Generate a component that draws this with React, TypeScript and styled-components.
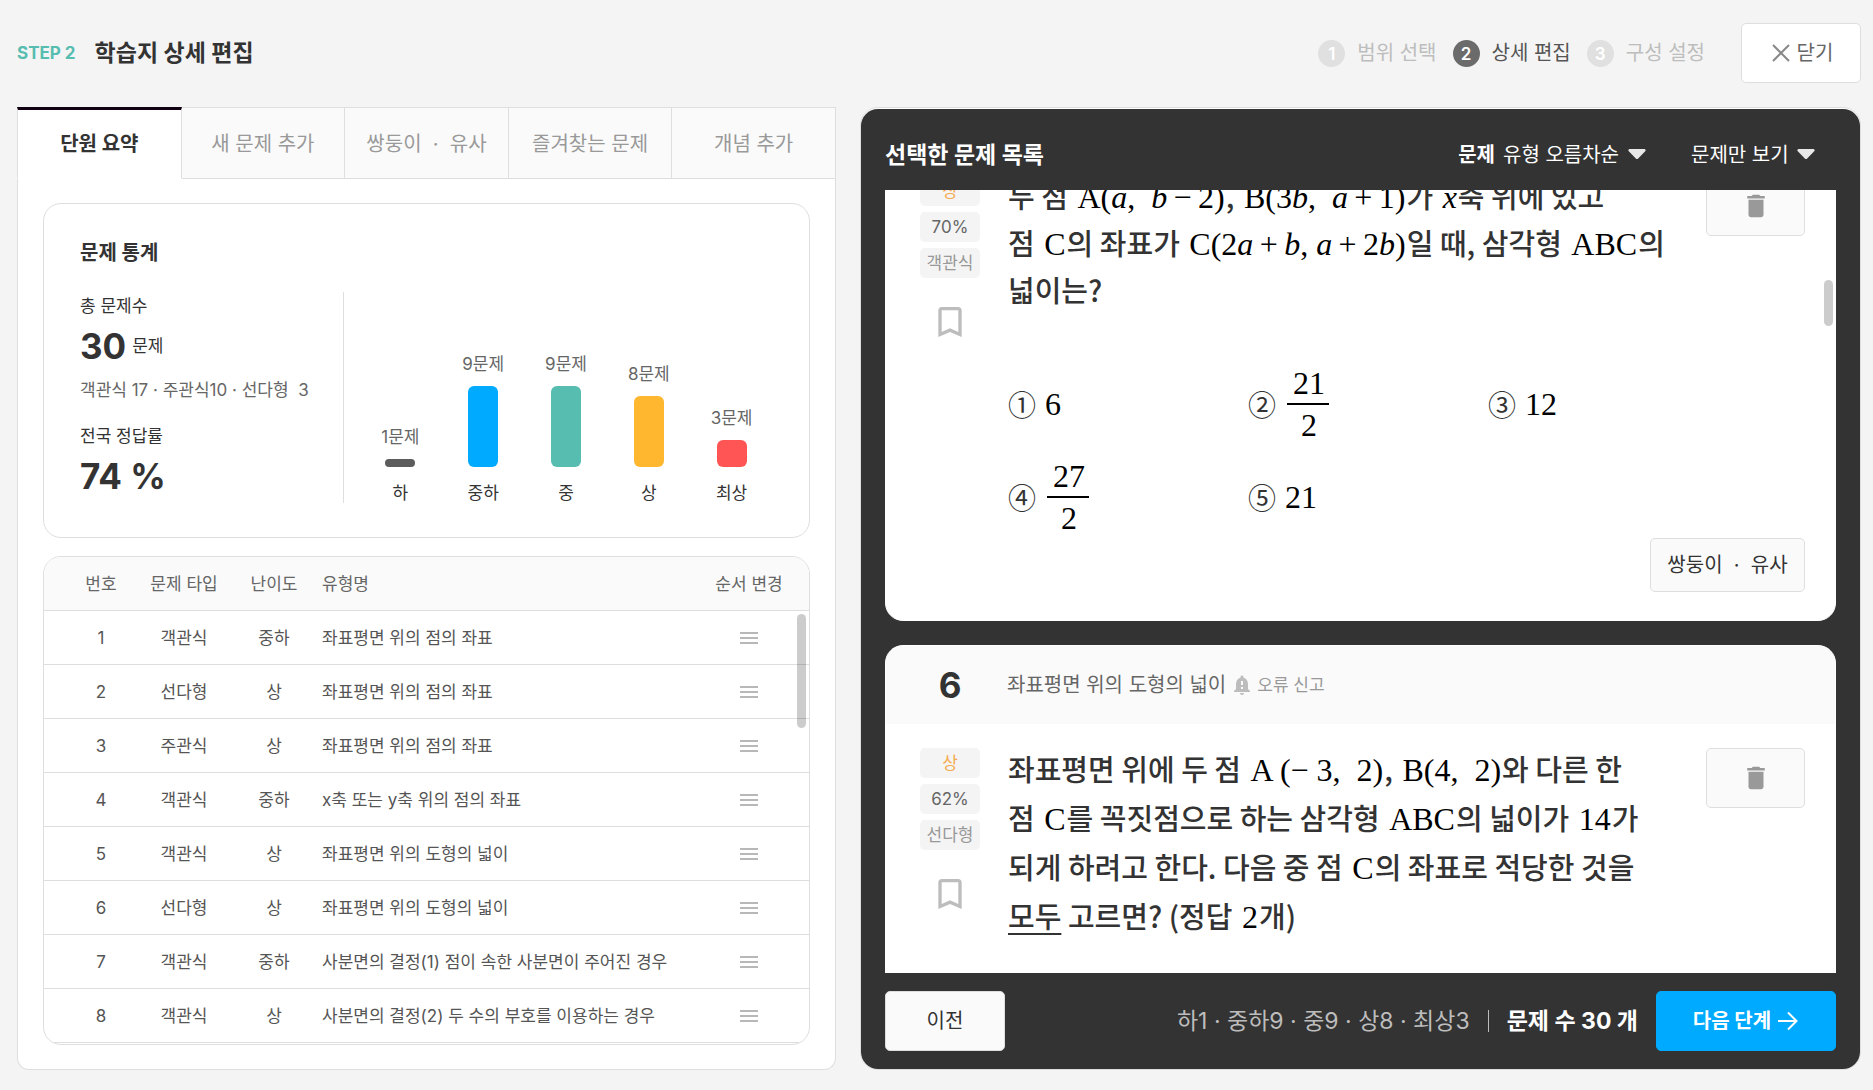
import React, { useLayoutEffect, useRef } from "react";
import styled, { createGlobalStyle, css } from "styled-components";
import {
  MdBookmarkBorder,
  MdDelete,
  MdMenu,
  MdNotificationImportant,
} from "react-icons/md";

const line = "#dedede";
const ink = "#333333";
const soft = "#666666";
const faint = "#999999";
const dark = "#333333";
const blue = "#00aaff";

const GlobalStyle = createGlobalStyle`
  *, *::before, *::after { box-sizing: border-box; }
  body {
    margin: 0;
    background: #f4f4f4;
    color: ${ink};
    font-family: Inter, "Noto Sans CJK KR", sans-serif;
    font-size: 17px;
    line-height: 28px;
  }
  button, select { font: inherit; color: inherit; cursor: pointer; }
  h1, h2, h3, p, ol { margin: 0; padding: 0; }
  svg { display: block; flex: none; }
`;

const Page = styled.div`
  display: flex;
  flex-direction: column;
  height: 100vh;
  min-height: 720px;
  padding: 0 12px 20px 17px;
`;

/* ---------- top bar ---------- */

const TopBar = styled.header`
  display: flex;
  align-items: center;
  height: 107px;
  padding-bottom: 1px;
  flex: none;
`;

const StepLabel = styled.span`
  color: #56bdb0;
  font-size: 17px;
  font-weight: 700;
  margin-right: 19px;
`;

const PageTitle = styled.h1`
  font-size: 23px;
  font-weight: 700;
  flex: 1;
`;

const Steps = styled.ol`
  display: flex;
  gap: 16px;
  list-style: none;
  margin-right: 36px;
`;

const Step = styled.li<{ $active?: boolean }>`
  display: flex;
  align-items: center;
  gap: 12px;
  font-size: 20px;
  color: ${(p) => (p.$active ? "#555555" : "#bdbdbd")};
`;

const StepNumber = styled.span<{ $active?: boolean }>`
  display: grid;
  place-items: center;
  width: 27px;
  height: 27px;
  border-radius: 50%;
  font-size: 17px;
  font-weight: 600;
  color: #ffffff;
  background: ${(p) => (p.$active ? "#6b6b6b" : "#e0e0e0")};
`;

const Button = styled.button<{ $width: number; $tone?: "primary" | "white"; $short?: boolean }>`
  display: flex;
  align-items: center;
  justify-content: center;
  gap: 4px;
  width: ${(p) => p.$width}px;
  height: ${(p) => (p.$short ? 54 : 60)}px;
  flex: none;
  padding: 0;
  border: 1px solid ${line};
  border-radius: 5px;
  background: ${(p) => (p.$tone === "white" ? "#ffffff" : "#fafafa")};
  font-size: 20px;
  color: ${(p) => (p.$tone === "white" ? soft : ink)};
  white-space: pre;
  ${(p) =>
    p.$tone === "primary" &&
    css`
      border-color: ${blue};
      background: ${blue};
      color: #ffffff;
      font-weight: 700;
    `}
`;

/* ---------- layout ---------- */

const Columns = styled.main`
  display: grid;
  grid-template-columns: minmax(0, 9fr) minmax(0, 11fr);
  gap: 24px;
  flex: 1;
  min-height: 0;
`;

const LeftPanel = styled.section`
  display: flex;
  flex-direction: column;
  min-height: 0;
`;

const Tabs = styled.nav`
  display: flex;
  flex: none;
  height: 72px;
`;

const Tab = styled.button<{ $active?: boolean }>`
  flex: 1 1 0;
  padding: 2px 0 0;
  font-size: 20px;
  white-space: pre;
  border: 1px solid ${line};
  background: #fafafa;
  color: ${faint};
  & + & {
    margin-left: -1px;
  }
  ${(p) =>
    p.$active &&
    css`
      position: relative;
      padding: 0;
      background: #ffffff;
      color: ${ink};
      font-weight: 700;
      border-top: 3px solid #110011;
      border-bottom-color: #ffffff;
    `}
`;

const LeftBody = styled.div`
  display: flex;
  flex-direction: column;
  gap: 18px;
  flex: 1;
  min-height: 0;
  padding: 24px 25px;
  background: #ffffff;
  border: 1px solid ${line};
  border-top: 0;
  border-radius: 0 0 12px 12px;
`;

const StatsCard = styled.section`
  flex: none;
  padding: 35px 36px 34px;
  border: 1px solid ${line};
  border-radius: 18px;
`;

const CardTitle = styled.h2`
  font-size: 20px;
  font-weight: 700;
  margin-bottom: 25px;
`;

const StatsRow = styled.div`
  display: flex;
  height: 211px;
`;

const Figures = styled.div`
  width: 264px;
  border-right: 1px solid ${line};
`;

const FigureLabel = styled.p`
  font-size: 17px;
`;

const FigureValue = styled.p`
  display: flex;
  align-items: center;
  gap: 6px;
  height: 52px;
  font-size: 17px;
`;

const Big = styled.strong`
  font-size: 35px;
  font-weight: 700;
`;

const FigureNote = styled.p`
  margin: 4px 0 18px;
  font-size: 17px;
  color: ${soft};
  white-space: pre;
`;

const Chart = styled.div`
  display: flex;
  align-items: flex-end;
  flex: 1;
  padding-left: 15px;
`;

const ChartItem = styled.div`
  display: flex;
  flex: 1;
  flex-direction: column;
  align-items: center;
  font-size: 17px;
  line-height: 20px;
`;

const BarCount = styled.span`
  color: ${soft};
`;

const Bar = styled.div`
  width: 30px;
  margin: 12px 0 16px;
  border-radius: 6px;
`;

/* ---------- problem table ---------- */

const TableCard = styled.section`
  position: relative;
  flex: 1;
  min-height: 0;
  overflow: hidden;
  border: 1px solid ${line};
  border-radius: 18px;
`;

const Table = styled.table`
  width: 100%;
  table-layout: fixed;
  border-spacing: 0;
  font-size: 17px;
  color: #555555;
`;

const HeadCell = styled.th<{ $left?: boolean; $width?: number; $inset?: boolean }>`
  height: 54px;
  width: ${(p) => (p.$width ? `${p.$width}px` : "auto")};
  padding: 0 0 0 ${(p) => (p.$inset ? 16 : 0)}px;
  font-weight: 400;
  text-align: ${(p) => (p.$left ? "left" : "center")};
  color: ${soft};
  background: #fafafa;
  border-bottom: 1px solid ${line};
`;

const Cell = styled.td<{ $left?: boolean; $inset?: boolean }>`
  height: 54px;
  padding: 0 0 0 ${(p) => (p.$inset ? 16 : 0)}px;
  text-align: ${(p) => (p.$left ? "left" : "center")};
  border-bottom: 1px solid ${line};
`;

const Handle = styled.button`
  display: block;
  margin: 0 auto;
  padding: 0;
  border: 0;
  background: none;
  color: #b8b8b8;
`;

const Thumb = styled.div<{ $top: number; $right: number; $width: number; $height: number }>`
  position: absolute;
  top: ${(p) => p.$top}px;
  right: ${(p) => p.$right}px;
  width: ${(p) => p.$width}px;
  height: ${(p) => p.$height}px;
  border-radius: 5px;
  background: rgba(0, 0, 0, 0.2);
`;

/* ---------- selected problems ---------- */

const RightPanel = styled.section`
  display: flex;
  min-height: 0;
  padding-top: 1px;
  background: #ffffff;
  border: 1px solid ${line};
  border-radius: 18px;
`;

const RightInner = styled.div`
  display: flex;
  flex-direction: column;
  flex: 1;
  min-width: 0;
  padding: 0 24px;
  border-radius: 17px;
  background: ${dark};
`;

const RightHeader = styled.header`
  display: flex;
  align-items: center;
  flex: none;
  height: 81px;
  padding: 11px 21px 0 0;
  color: #ffffff;
`;

const RightTitle = styled.h2`
  flex: 1;
  font-size: 23px;
  font-weight: 700;
`;

const SelectField = styled.label`
  display: flex;
  align-items: center;
  gap: 8px;
  font-size: 20px;
  & + & {
    margin-left: 45px;
  }
`;

const SelectLabel = styled.span`
  font-weight: 700;
`;

const Select = styled.select`
  appearance: none;
  padding: 0;
  border: 0;
  background: none;
  color: #ffffff;
  option {
    color: ${ink};
  }
`;

const ListFrame = styled.div`
  position: relative;
  display: flex;
  flex: 1;
  min-height: 0;
`;

const List = styled.div`
  display: flex;
  flex-direction: column;
  gap: 24px;
  flex: 1;
  min-width: 0;
  overflow-y: auto;
  scrollbar-width: none;
`;

const Problem = styled.article`
  display: flex;
  flex-direction: column;
  flex: none;
  min-height: 548px;
  border: 1px solid #ffffff;
  border-radius: 18px;
  overflow: hidden;
  background: #ffffff;
`;

const ProblemHeader = styled.header`
  display: flex;
  align-items: center;
  height: 78px;
  padding-left: 34px;
  background: #fafafa;
`;

const ProblemNumber = styled.span`
  width: 60px;
  margin-right: 27px;
  text-align: center;
  font-size: 35px;
  font-weight: 700;
`;

const ProblemName = styled.h3`
  margin-right: 4px;
  font-size: 20px;
  font-weight: 400;
  color: ${soft};
`;

const Report = styled.button`
  display: flex;
  align-items: center;
  gap: 3px;
  padding: 0;
  border: 0;
  background: none;
  font-size: 17px;
  color: ${faint};
  svg {
    color: #bdbdbd;
  }
`;

const ProblemBody = styled.div`
  display: flex;
  gap: 28px;
  padding: 20px 30px 0 34px;
`;

const Side = styled.div`
  display: flex;
  flex-direction: column;
  align-items: center;
  gap: 6px;
  width: 60px;
  flex: none;
  padding-top: 4px;
`;

const Badge = styled.span<{ $color: string }>`
  width: 60px;
  height: 30px;
  line-height: 30px;
  border-radius: 5px;
  background: #f4f4f4;
  text-align: center;
  font-size: 17px;
  color: ${(p) => p.$color};
`;

const IconButton = styled.button`
  margin-top: 18px;
  padding: 0;
  border: 0;
  background: none;
  color: #bdbdbd;
`;

const Question = styled.div<{ $leading: number }>`
  flex: 1;
  min-width: 0;
  font-family: "Noto Sans CJK KR", sans-serif;
  font-size: 29px;
  font-weight: 500;
  line-height: ${(p) => p.$leading}px;
  white-space: pre;
`;

const QuestionLine = styled.p`
  height: 1lh;
`;

const Formula = styled.span`
  margin: 0 1px 0 3px;
  font-family: "Liberation Serif", serif;
  font-size: 32px;
  font-weight: 400;
  line-height: 1;
  color: #000000;
`;

const Underlined = styled.span`
  text-decoration: underline;
  text-decoration-thickness: 2px;
  text-underline-offset: 5px;
`;

const Choices = styled.ol`
  display: grid;
  grid-template-columns: repeat(3, 240px);
  grid-auto-rows: 78px;
  row-gap: 15px;
  margin-top: 52px;
  font-size: 28px;
  list-style: none;
`;

const Choice = styled.li`
  display: flex;
  align-items: center;
  gap: 6px;
  font-weight: 400;
`;

const Fraction = styled.span`
  display: flex;
  flex-direction: column;
  align-items: center;
  width: 42px;
  margin-left: 5px;
`;

const Numerator = styled.span`
  width: 100%;
  height: 40px;
  line-height: 34px;
  text-align: center;
  border-bottom: 2px solid #000000;
`;

const Denominator = styled.span`
  height: 38px;
  line-height: 38px;
`;

const DeleteSlot = styled.div`
  flex: none;
  padding-top: 4px;
  svg {
    color: ${faint};
  }
`;

const ProblemFooter = styled.footer`
  display: flex;
  justify-content: flex-end;
  margin-top: auto;
  padding: 0 30px 28px;
`;

const RightFooter = styled.footer`
  display: flex;
  align-items: center;
  flex: none;
  height: 96px;
`;

const Summary = styled.p`
  display: flex;
  align-items: center;
  justify-content: flex-end;
  flex: 1;
  margin-right: 18px;
  font-size: 23px;
  color: #bdbdbd;
`;

const Divider = styled.span`
  width: 1px;
  height: 22px;
  margin: 0 18px;
  background: #bdbdbd;
`;

const Total = styled.strong`
  font-weight: 700;
  color: #ffffff;
`;

/* ---------- icons ---------- */

const CloseIcon = () => (
  <svg width="24" height="18" viewBox="0 0 24 18" fill="none" stroke="#888888" strokeWidth="2" aria-hidden="true">
    <path d="M4 1l16 16M20 1L4 17" />
  </svg>
);

const CaretIcon = () => (
  <svg width="18" height="12" viewBox="0 0 18 12" fill="#e8e8e8" aria-hidden="true">
    <path d="M2 0h14c1.500 0 2.200 1.300 1.200 2.300l-7 7.200c-.7.700-1.700.7-2.400 0l-7-7.200C-.2 1.300.5 0 2 0z" />
  </svg>
);

const ArrowIcon = () => (
  <svg width="24" height="20" viewBox="0 0 24 20" fill="none" stroke="#ffffff" strokeWidth="2" aria-hidden="true">
    <path d="M3 10h18M13 1.500L21.500 10L13 18.500" />
  </svg>
);

/* ---------- data ---------- */

const steps = ["범위 선택", "상세 편집", "구성 설정"];
const tabs = ["단원 요약", "새 문제 추가", "쌍둥이  ·  유사", "즐겨찾는 문제", "개념 추가"];

const levels = [
  { name: "하", count: 1, height: 8, color: "#5c5c5c" },
  { name: "중하", count: 9, height: 81, color: "#00aaff" },
  { name: "중", count: 9, height: 81, color: "#56bdb0" },
  { name: "상", count: 8, height: 71, color: "#ffb72f" },
  { name: "최상", count: 3, height: 27, color: "#ff5555" },
];

const problems = [
  ["객관식", "중하", "좌표평면 위의 점의 좌표"],
  ["선다형", "상", "좌표평면 위의 점의 좌표"],
  ["주관식", "상", "좌표평면 위의 점의 좌표"],
  ["객관식", "중하", "x축 또는 y축 위의 점의 좌표"],
  ["객관식", "상", "좌표평면 위의 도형의 넓이"],
  ["선다형", "상", "좌표평면 위의 도형의 넓이"],
  ["객관식", "중하", "사분면의 결정(1) 점이 속한 사분면이 주어진 경우"],
  ["객관식", "상", "사분면의 결정(2) 두 수의 부호를 이용하는 경우"],
];

/* ---------- parts ---------- */

type ProblemCardProps = {
  number: number;
  name: string;
  rate: string;
  kind: string;
  leading: number;
  children: React.ReactNode;
};

function ProblemCard({ number, name, rate, kind, leading, children }: ProblemCardProps) {
  return (
    <Problem>
      <ProblemHeader>
        <ProblemNumber>{number}</ProblemNumber>
        <ProblemName>{name}</ProblemName>
        <Report type="button">
          <MdNotificationImportant size={24} />
          오류 신고
        </Report>
      </ProblemHeader>
      <ProblemBody>
        <Side>
          <Badge $color="#f5ab4f">상</Badge>
          <Badge $color={soft}>{rate}</Badge>
          <Badge $color={faint}>{kind}</Badge>
          <IconButton type="button" aria-label="북마크">
            <MdBookmarkBorder size={40} />
          </IconButton>
        </Side>
        <Question $leading={leading}>{children}</Question>
        <DeleteSlot>
          <Button type="button" $width={99} aria-label="삭제">
            <MdDelete size={30} />
          </Button>
        </DeleteSlot>
      </ProblemBody>
      <ProblemFooter>
        <Button type="button" $width={155} $short>
          {"쌍둥이  ·  유사"}
        </Button>
      </ProblemFooter>
    </Problem>
  );
}

const Frac = ({ top, bottom }: { top: string; bottom: string }) => (
  <Fraction>
    <Numerator>
      <Formula>{top}</Formula>
    </Numerator>
    <Denominator>
      <Formula>{bottom}</Formula>
    </Denominator>
  </Fraction>
);

/* A binary operator set between thin spaces. */
const Op = ({ sign }: { sign: string }) => <>{`\u2009${sign}\u2009`}</>;

export default function App() {
  const listRef = useRef<HTMLDivElement>(null);

  useLayoutEffect(() => {
    if (listRef.current) listRef.current.scrollTop = 117;
  }, []);

  return (
    <>
      <GlobalStyle />
      <Page>
        <TopBar>
          <StepLabel>STEP 2</StepLabel>
          <PageTitle>학습지 상세 편집</PageTitle>
          <Steps>
            {steps.map((name, i) => (
              <Step key={name} $active={i === 1}>
                <StepNumber $active={i === 1}>{i + 1}</StepNumber>
                {name}
              </Step>
            ))}
          </Steps>
          <Button type="button" $width={120} $tone="white">
            <CloseIcon />
            닫기
          </Button>
        </TopBar>

        <Columns>
          <LeftPanel>
            <Tabs>
              {tabs.map((name, i) => (
                <Tab key={name} type="button" $active={i === 0}>
                  {name}
                </Tab>
              ))}
            </Tabs>
            <LeftBody>
              <StatsCard>
                <CardTitle>문제 통계</CardTitle>
                <StatsRow>
                  <Figures>
                    <FigureLabel>총 문제수</FigureLabel>
                    <FigureValue>
                      <Big>30</Big>문제
                    </FigureValue>
                    <FigureNote>{"객관식 17 · 주관식10 · 선다형  3"}</FigureNote>
                    <FigureLabel>전국 정답률</FigureLabel>
                    <FigureValue>
                      <Big>74 %</Big>
                    </FigureValue>
                  </Figures>
                  <Chart>
                    {levels.map((l) => (
                      <ChartItem key={l.name}>
                        <BarCount>{l.count}문제</BarCount>
                        <Bar style={{ height: l.height, background: l.color }} />
                        <span>{l.name}</span>
                      </ChartItem>
                    ))}
                  </Chart>
                </StatsRow>
              </StatsCard>

              <TableCard>
                <Table>
                  <thead>
                    <tr>
                      <HeadCell $width={98} $inset>번호</HeadCell>
                      <HeadCell $width={84}>문제 타입</HeadCell>
                      <HeadCell $width={96}>난이도</HeadCell>
                      <HeadCell $left>유형명</HeadCell>
                      <HeadCell $width={120}>순서 변경</HeadCell>
                    </tr>
                  </thead>
                  <tbody>
                    {problems.map(([kind, level, name], i) => (
                      <tr key={i}>
                        <Cell $inset>{i + 1}</Cell>
                        <Cell>{kind}</Cell>
                        <Cell>{level}</Cell>
                        <Cell $left>{name}</Cell>
                        <Cell>
                          <Handle type="button" aria-label="순서 변경">
                            <MdMenu size={24} />
                          </Handle>
                        </Cell>
                      </tr>
                    ))}
                  </tbody>
                </Table>
                <Thumb $top={57} $right={3} $width={9} $height={114} />
              </TableCard>
            </LeftBody>
          </LeftPanel>

          <RightPanel>
            <RightInner>
              <RightHeader>
                <RightTitle>선택한 문제 목록</RightTitle>
                <SelectField>
                  <SelectLabel>문제</SelectLabel>
                  <Select defaultValue="asc">
                    <option value="asc">유형 오름차순</option>
                  </Select>
                  <CaretIcon />
                </SelectField>
                <SelectField>
                  <Select defaultValue="only" aria-label="보기 방식">
                    <option value="only">문제만 보기</option>
                  </Select>
                  <CaretIcon />
                </SelectField>
              </RightHeader>

              <ListFrame>
                <List ref={listRef}>
                  <ProblemCard number={5} name="좌표평면 위의 도형의 넓이" rate="70%" kind="객관식" leading={47}>
                    <QuestionLine>
                      두 점 <Formula>A(<i>a</i>,  <i>b</i><Op sign="−" />2)</Formula>,{" "}
                      <Formula>B(3<i>b</i>,  <i>a</i><Op sign="+" />1)</Formula>가 <Formula><i>x</i></Formula>축 위에 있고
                    </QuestionLine>
                    <QuestionLine>
                      점 <Formula>C</Formula>의 좌표가{" "}
                      <Formula>
                        C(2<i>a</i><Op sign="+" /><i>b</i>, <i>a</i><Op sign="+" />2<i>b</i>)
                      </Formula>
                      일 때, 삼각형 <Formula>ABC</Formula>의
                    </QuestionLine>
                    <QuestionLine>넓이는?</QuestionLine>
                    <Choices>
                      <Choice>①<Formula>6</Formula></Choice>
                      <Choice>②<Frac top="21" bottom="2" /></Choice>
                      <Choice>③<Formula>12</Formula></Choice>
                      <Choice>④<Frac top="27" bottom="2" /></Choice>
                      <Choice>⑤<Formula>21</Formula></Choice>
                    </Choices>
                  </ProblemCard>

                  <ProblemCard number={6} name="좌표평면 위의 도형의 넓이" rate="62%" kind="선다형" leading={49}>
                    <QuestionLine>
                      좌표평면 위에 두 점 <Formula>A (− 3,  2)</Formula>, <Formula>B(4,  2)</Formula>와 다른 한
                    </QuestionLine>
                    <QuestionLine>
                      점 <Formula>C</Formula>를 꼭짓점으로 하는 삼각형 <Formula>ABC</Formula>의 넓이가{" "}
                      <Formula>14</Formula>가
                    </QuestionLine>
                    <QuestionLine>
                      되게 하려고 한다. 다음 중 점 <Formula>C</Formula>의 좌표로 적당한 것을
                    </QuestionLine>
                    <QuestionLine>
                      <Underlined>모두</Underlined> 고르면? (정답 <Formula>2</Formula>개)
                    </QuestionLine>
                  </ProblemCard>
                </List>
                <Thumb $top={90} $right={3} $width={9} $height={46} />
              </ListFrame>

              <RightFooter>
                <Button type="button" $width={120}>이전</Button>
                <Summary>
                  하1 · 중하9 · 중9 · 상8 · 최상3
                  <Divider />
                  <Total>문제 수 30 개</Total>
                </Summary>
                <Button type="button" $width={180} $tone="primary">
                  다음 단계
                  <ArrowIcon />
                </Button>
              </RightFooter>
            </RightInner>
          </RightPanel>
        </Columns>
      </Page>
    </>
  );
}
